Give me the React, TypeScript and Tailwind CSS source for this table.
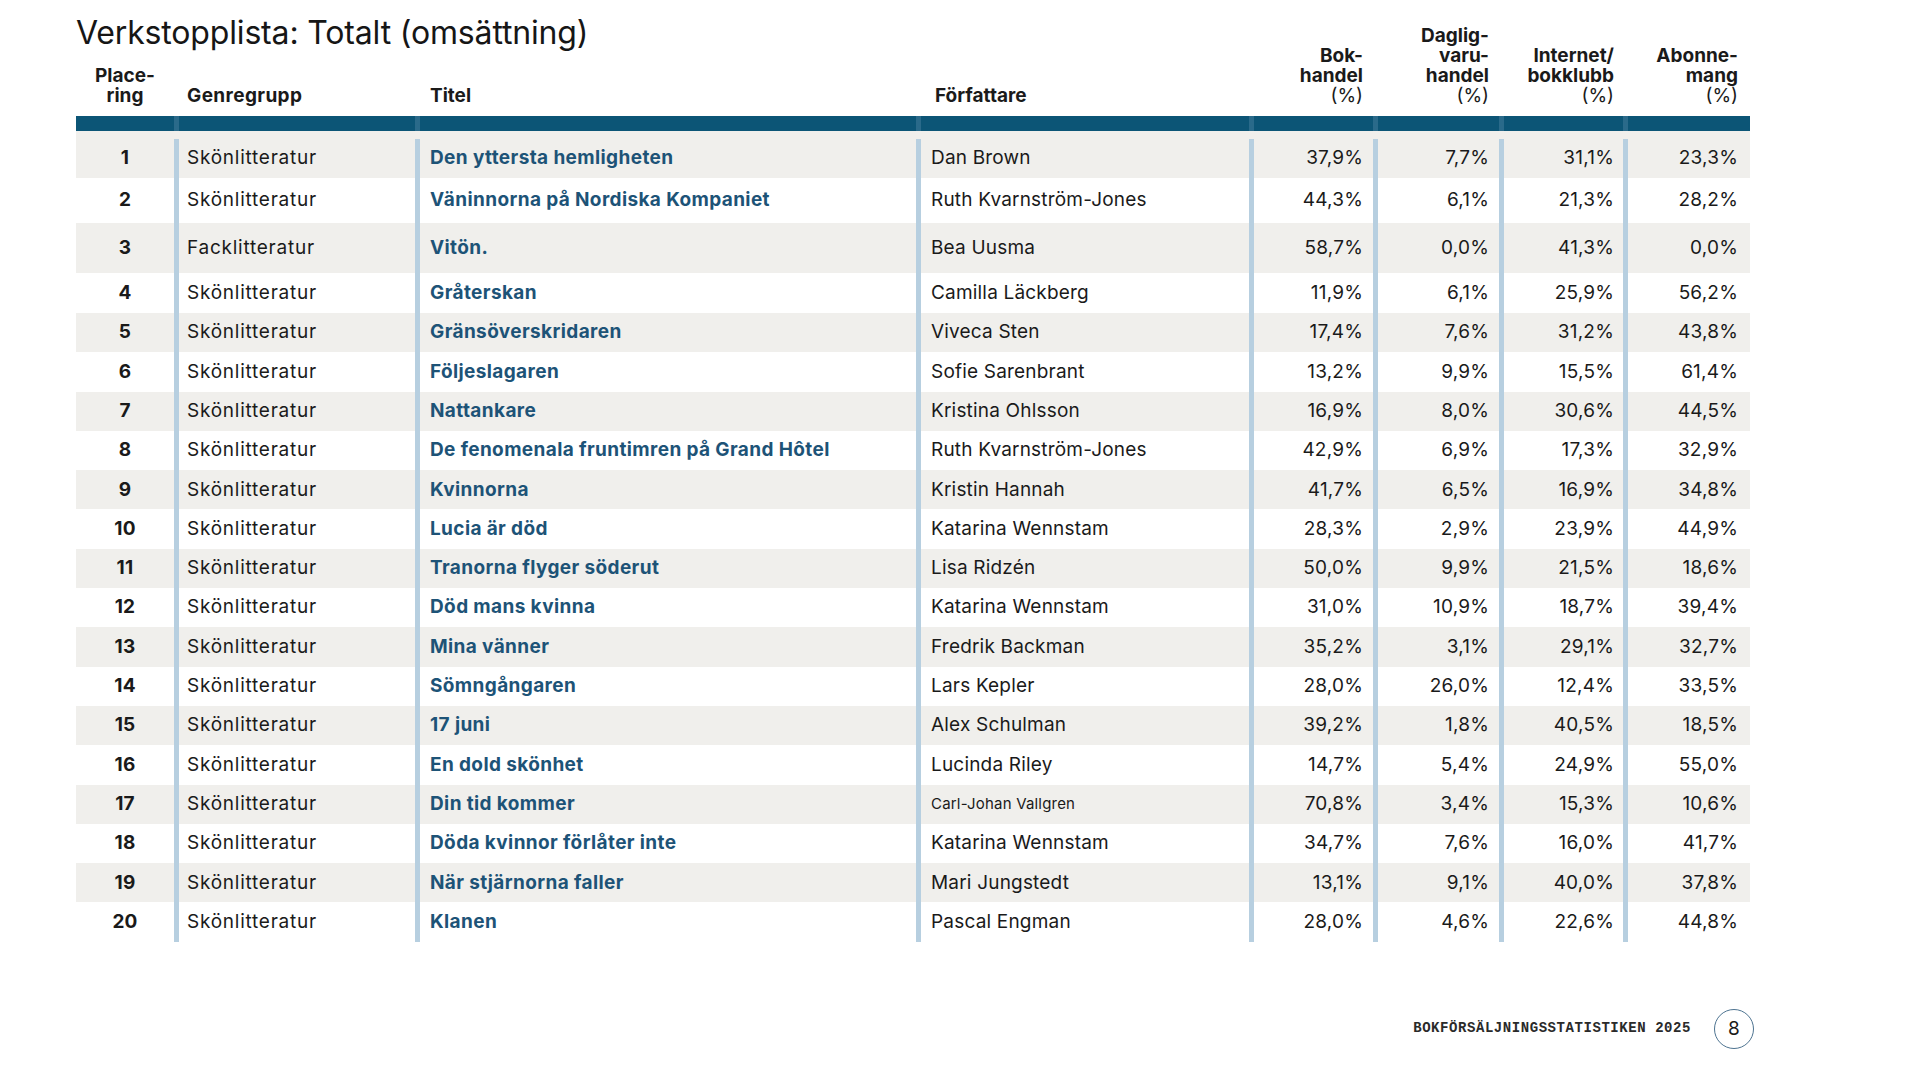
import React from "react";

// Verkstopplista rows
const rows = [
  ["1", "Skönlitteratur", "Den yttersta hemligheten", "Dan Brown", "37,9%", "7,7%", "31,1%", "23,3%"],
  ["2", "Skönlitteratur", "Väninnorna på Nordiska Kompaniet", "Ruth Kvarnström-Jones", "44,3%", "6,1%", "21,3%", "28,2%"],
  ["3", "Facklitteratur", "Vitön.", "Bea Uusma", "58,7%", "0,0%", "41,3%", "0,0%"],
  ["4", "Skönlitteratur", "Gråterskan", "Camilla Läckberg", "11,9%", "6,1%", "25,9%", "56,2%"],
  ["5", "Skönlitteratur", "Gränsöverskridaren", "Viveca Sten", "17,4%", "7,6%", "31,2%", "43,8%"],
  ["6", "Skönlitteratur", "Följeslagaren", "Sofie Sarenbrant", "13,2%", "9,9%", "15,5%", "61,4%"],
  ["7", "Skönlitteratur", "Nattankare", "Kristina Ohlsson", "16,9%", "8,0%", "30,6%", "44,5%"],
  ["8", "Skönlitteratur", "De fenomenala fruntimren på Grand Hôtel", "Ruth Kvarnström-Jones", "42,9%", "6,9%", "17,3%", "32,9%"],
  ["9", "Skönlitteratur", "Kvinnorna", "Kristin Hannah", "41,7%", "6,5%", "16,9%", "34,8%"],
  ["10", "Skönlitteratur", "Lucia är död", "Katarina Wennstam", "28,3%", "2,9%", "23,9%", "44,9%"],
  ["11", "Skönlitteratur", "Tranorna flyger söderut", "Lisa Ridzén", "50,0%", "9,9%", "21,5%", "18,6%"],
  ["12", "Skönlitteratur", "Död mans kvinna", "Katarina Wennstam", "31,0%", "10,9%", "18,7%", "39,4%"],
  ["13", "Skönlitteratur", "Mina vänner", "Fredrik Backman", "35,2%", "3,1%", "29,1%", "32,7%"],
  ["14", "Skönlitteratur", "Sömngångaren", "Lars Kepler", "28,0%", "26,0%", "12,4%", "33,5%"],
  ["15", "Skönlitteratur", "17 juni", "Alex Schulman", "39,2%", "1,8%", "40,5%", "18,5%"],
  ["16", "Skönlitteratur", "En dold skönhet", "Lucinda Riley", "14,7%", "5,4%", "24,9%", "55,0%"],
  ["17", "Skönlitteratur", "Din tid kommer", "Carl-Johan Vallgren", "70,8%", "3,4%", "15,3%", "10,6%"],
  ["18", "Skönlitteratur", "Döda kvinnor förlåter inte", "Katarina Wennstam", "34,7%", "7,6%", "16,0%", "41,7%"],
  ["19", "Skönlitteratur", "När stjärnorna faller", "Mari Jungstedt", "13,1%", "9,1%", "40,0%", "37,8%"],
  ["20", "Skönlitteratur", "Klanen", "Pascal Engman", "28,0%", "4,6%", "22,6%", "44,8%"],
];

const rowHeights = ["h-[47px] pt-[8px]", "h-[45px]", "h-[50px]", "h-[40px]"];

const cols = "grid grid-cols-[98px_241px_501px_333px_124px_126px_124px_127px]";
const div = "border-l-[5px] border-[#b7cfe0]";

export default function App() {
  return (
    <main className="w-[1920px] h-[1080px] bg-white text-[#1a1a1a] font-['Inter',sans-serif]">
      <div className="pl-[76px] pt-[14px] w-[1750px]">
        {/* Header */}
        <div className={`${cols} grid-rows-[52px_40px] text-[19px] leading-[20px]`}>
          <h1 className="col-span-4 row-start-1 self-start text-[32px] leading-[38px] font-normal tracking-[-0.005em] text-[#161616]">
            Verkstopplista: Totalt (omsättning)
          </h1>
          <div className="row-start-2 col-start-1 self-end text-center font-bold">
            Place-<br />ring
          </div>
          <div className="row-start-2 col-start-2 self-end pl-[13px] font-bold tracking-[0.02em]">Genregrupp</div>
          <div className="row-start-2 col-start-3 self-end pl-[15px] font-bold">Titel</div>
          <div className="row-start-2 col-start-4 self-end pl-[19px] font-bold">Författare</div>
          <div className="row-start-1 row-span-2 col-start-5 self-end text-right pr-[10px]">
            <span className="font-bold">Bok-<br />handel</span><br />(%)
          </div>
          <div className="row-start-1 row-span-2 col-start-6 self-end text-right pr-[10px]">
            <span className="font-bold">Daglig-<br />varu-<br />handel</span><br />(%)
          </div>
          <div className="row-start-1 row-span-2 col-start-7 self-end text-right pr-[9px]">
            <span className="font-bold">Internet/<br />bokklubb</span><br />(%)
          </div>
          <div className="row-start-1 row-span-2 col-start-8 self-end text-right pr-[12px]">
            <span className="font-bold">Abonne-<br />mang</span><br />(%)
          </div>
        </div>

        {/* Blue bar */}
        <div className={`${cols} mt-[10px] h-[15px] bg-[#0c5576]`}>
          <div />
          {[0, 1, 2, 3, 4, 5, 6].map((i) => (
            <div key={i} className="border-l-[5px] border-[#2a6a8a]" />
          ))}
        </div>

        {/* Body */}
        <div className="text-[19px] tracking-[0.01em]">
          {rows.map((r, i) => (
            <div
              key={r[0]}
              className={`${cols} ${rowHeights[i] ?? "h-[39.3px]"} ${i % 2 === 0 ? "bg-[#f0efec]" : "bg-white"}`}
            >
              <div className="flex items-center justify-center font-bold">{r[0]}</div>
              <div className={`${div} flex items-center pl-[8px] tracking-[0.04em]`}>{r[1]}</div>
              <div className={`${div} flex items-center pl-[10px] font-bold tracking-[0.02em] text-[#1d5377]`}>{r[2]}</div>
              <div className={`${div} flex items-center pl-[10px] ${r[0] === "17" ? "text-[15px]" : ""}`}>{r[3]}</div>
              <div className={`${div} flex items-center justify-end pr-[10px]`}>{r[4]}</div>
              <div className={`${div} flex items-center justify-end pr-[10px]`}>{r[5]}</div>
              <div className={`${div} flex items-center justify-end pr-[9px]`}>{r[6]}</div>
              <div className={`${div} flex items-center justify-end pr-[12px]`}>{r[7]}</div>
            </div>
          ))}
        </div>

        {/* Footer */}
        <div className="mt-[67px] flex items-center justify-end gap-[23px] -mr-[4px]">
          <span className="font-['Liberation_Mono',monospace] font-bold text-[14px] tracking-[0.04em] text-[#2a2a2a]">
            BOKFÖRSÄLJNINGSSTATISTIKEN 2025
          </span>
          <div className="w-[40px] h-[40px] rounded-full border-[1.5px] border-[#4d7390] flex items-center justify-center text-[19px] text-[#1a1a1a]">
            8
          </div>
        </div>
      </div>
    </main>
  );
}
